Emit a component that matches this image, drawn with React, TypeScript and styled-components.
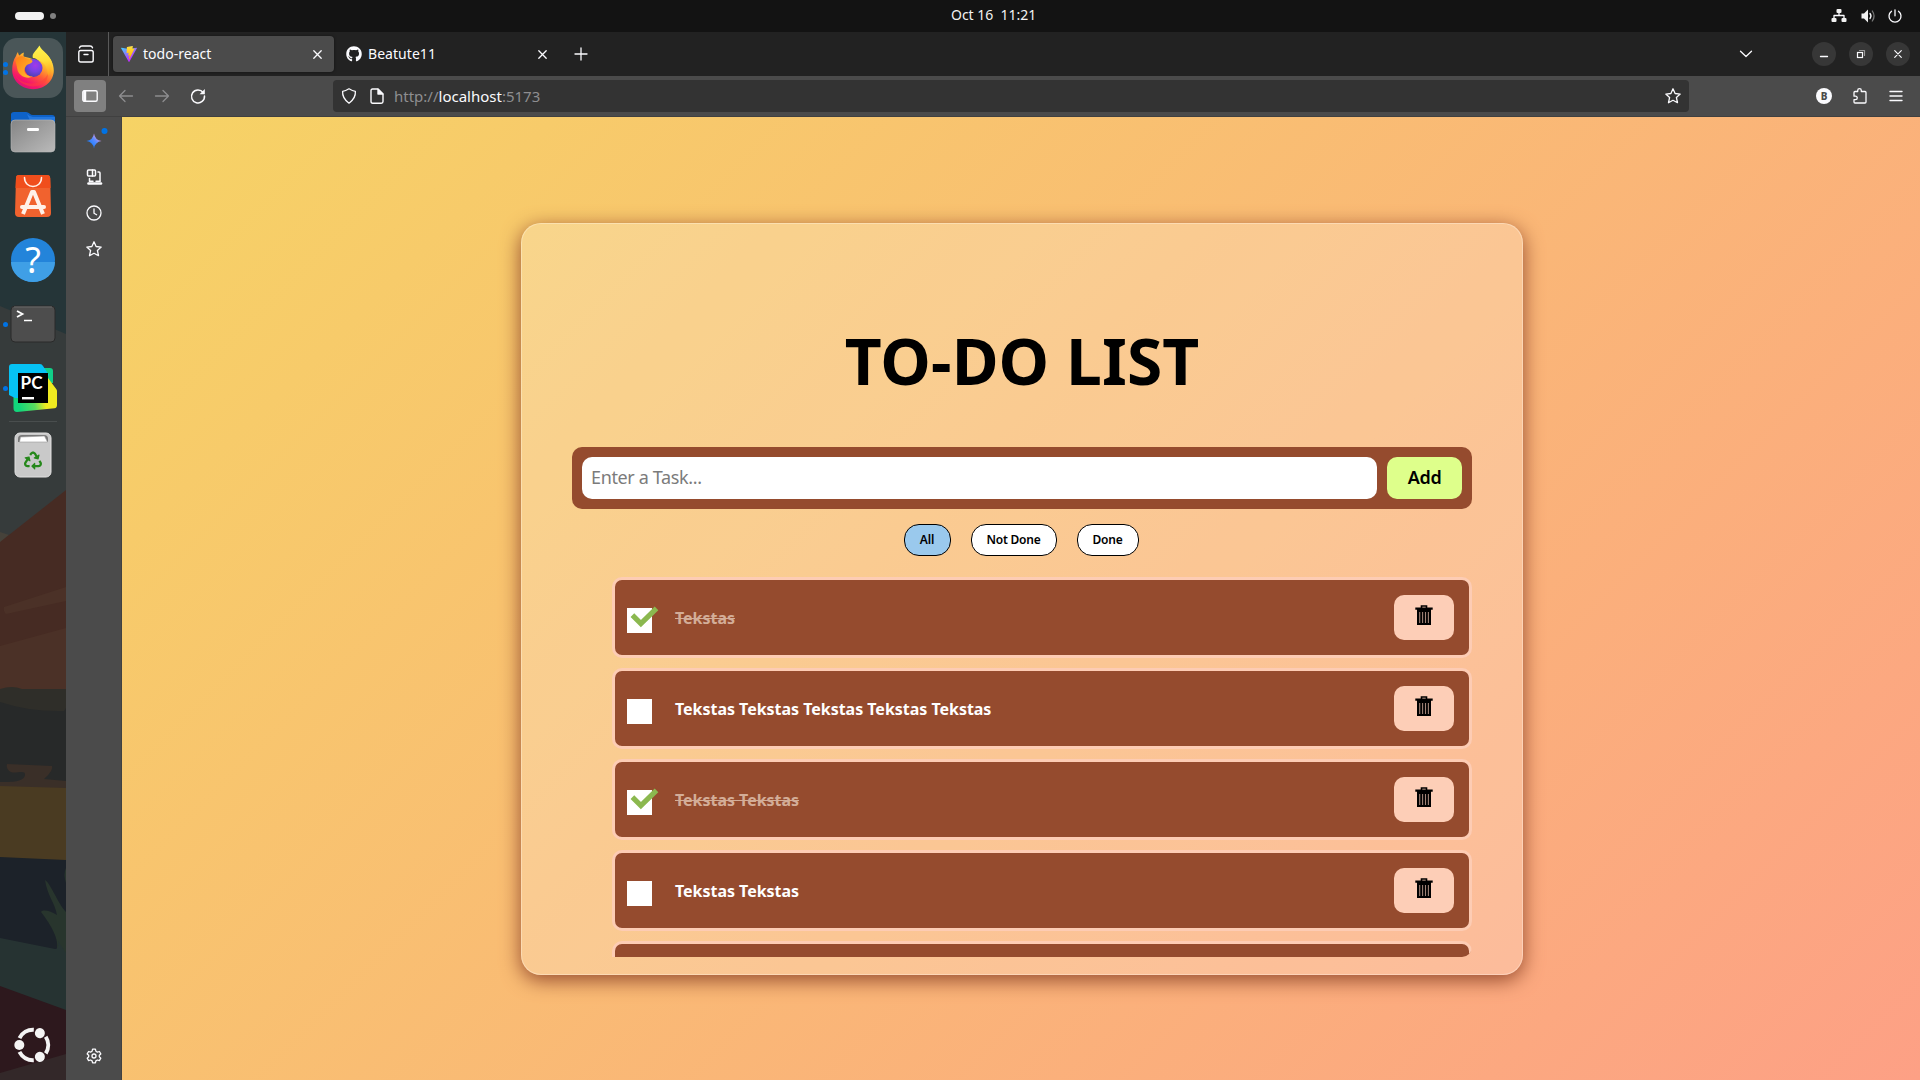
import React, { useState } from "react";
import styled, { createGlobalStyle } from "styled-components";
import { FaGithub, FaRecycle } from "react-icons/fa";

const ui = `"Noto Sans", "Open Sans", sans-serif`;

const GlobalStyle = createGlobalStyle`
  * { box-sizing: border-box; }
  body { margin: 0; background: #131313; font-family: ${ui}; overflow: hidden; }
  button, input { font-family: inherit; }
  svg { display: block; flex: none; overflow: visible; }
`;

const Desktop = styled.div`
  width: 1920px;
  height: 1080px;
  display: grid;
  grid-template: 32px 1048px / 66px 1fr;
  overflow: hidden;
`;

const TopBar = styled.header`
  grid-column: 1 / -1;
  display: grid;
  grid-template-columns: 951px 1fr auto;
  align-items: center;
  background: #131313;
  color: #f2f2f2;
  padding-right: 18px;
`;
const Workspaces = styled.div`
  display: flex;
  align-items: center;
  gap: 6px;
  padding-left: 15px;
`;
const WorkspaceDot = styled.span<{ $active?: boolean }>`
  width: ${(p) => (p.$active ? 29 : 6)}px;
  height: ${(p) => (p.$active ? 8 : 6)}px;
  border-radius: 4px;
  background: ${(p) => (p.$active ? "#f2f2f2" : "#808080")};
`;
const Clock = styled.div`
  font-size: 14px;
  line-height: 20px;
  letter-spacing: -0.02px;
  white-space: pre;
  padding-bottom: 2px;
`;
const StatusIcons = styled.div`
  display: flex;
  align-items: center;
  gap: 12.5px;
`;

const Dock = styled.nav`
  position: relative;
  display: flex;
  flex-direction: column;
  align-items: center;
  padding-top: 6px;
  overflow: hidden;
`;
const Wallpaper = styled.svg`
  position: absolute;
  inset: 0;
`;
const DockItem = styled.div<{ $h: number; $active?: boolean }>`
  position: relative;
  width: 60px;
  height: ${(p) => p.$h}px;
  display: flex;
  align-items: center;
  justify-content: center;
  padding-bottom: ${(p) => (p.$active ? 2 : 0)}px;
  border-radius: 14px;
  background: ${(p) => (p.$active ? "#4a5658" : "transparent")};
`;
const Running = styled.span`
  position: absolute;
  left: 0;
  top: 0;
  height: 100%;
  display: flex;
  flex-direction: column;
  justify-content: center;
  gap: 3px;
  i { width: 5px; height: 5px; border-radius: 50%; background: #0073e5; }
`;
const DockRule = styled.hr`
  position: relative;
  width: 48px;
  height: 1px;
  margin: -2px 0 6px;
  border: 0;
  background: #494e4e;
`;
const DockSpacer = styled.div`
  flex: 1;
`;

const Browser = styled.div`
  display: grid;
  grid-template: 44px 41px 963px / 56px 1fr;
  background: #4b4b4b;
  color: #fbfbfe;
`;
const TabStrip = styled.div`
  grid-column: 1 / -1;
  display: flex;
  align-items: center;
  background: #222222;
  padding-right: 10px;
`;
const TabArchive = styled.div`
  width: 43px;
  height: 44px;
  padding-left: 12px;
  margin-right: 4px;
  display: flex;
  align-items: center;
  border-right: 1px solid #5a5a5a;
`;
const Tab = styled.div<{ $active?: boolean }>`
  width: 221px;
  height: 36px;
  display: flex;
  align-items: center;
  gap: 6px;
  padding: 0 12px 0 8px;
  margin-right: 4px;
  border-radius: 4px;
  background: ${(p) => (p.$active ? "#4b4b4b" : "transparent")};
  box-shadow: ${(p) => (p.$active ? "0 0 3px rgba(0,0,0,.5)" : "none")};
`;
const TabTitle = styled.span<{ $spacing: number }>`
  flex: 1;
  font-size: 14px;
  line-height: 20px;
  letter-spacing: ${(p) => p.$spacing}px;
`;
const NewTab = styled.div`
  padding-left: 11px;
`;
const Spacer = styled.div`
  flex: 1;
`;
const TabChevron = styled.div`
  margin-right: 59px;
`;
const WindowButtons = styled.div`
  display: flex;
  gap: 13px;
`;
const WindowButton = styled.span`
  width: 24px;
  height: 24px;
  border-radius: 50%;
  background: #373737;
  display: flex;
  align-items: center;
  justify-content: center;
`;

const NavBar = styled.div`
  grid-column: 1 / -1;
  display: flex;
  align-items: center;
  padding: 0 16px 1px 8px;
  border-bottom: 1px solid #404040;
`;
const SidebarToggle = styled.div`
  width: 32px;
  height: 32px;
  border-radius: 4px;
  background: #808080;
  display: flex;
  align-items: center;
  justify-content: center;
`;
const NavIcons = styled.div`
  display: flex;
  gap: 20px;
  padding-left: 12px;
  width: 227px;
`;
const AddressBar = styled.div`
  width: 1356px;
  height: 32px;
  border-radius: 4px;
  background: #333333;
  display: flex;
  align-items: center;
  padding: 0 8px;
`;
const Url = styled.span`
  flex: 1;
  margin-left: 1px;
  font-size: 15px;
  line-height: 20px;
  color: #8e8e90;
  b { font-weight: 400; color: #fbfbfe; }
`;
const NavTools = styled.div`
  flex: 1;
  display: flex;
  justify-content: flex-end;
  gap: 20px;
`;
const Account = styled.span`
  width: 16px;
  height: 16px;
  border-radius: 50%;
  background: #fbfbfe;
  color: #4b4b4b;
  font: 800 10px/16px ${ui};
  text-align: center;
`;

const SideBar = styled.aside`
  display: flex;
  flex-direction: column;
  align-items: center;
  gap: 20px;
  padding: 10px 0 16px;
  border-right: 1px solid #414141;
`;

const Page = styled.main`
  display: flex;
  align-items: center;
  justify-content: center;
  padding-left: 2px;
  padding-top: 1px;
  background: linear-gradient(135deg, #f6d365 0%, #fda085 100%);
`;
const Card = styled.section`
  width: 1002px;
  height: 752px;
  padding: 0 50px;
  border-radius: 20px;
  border: 1px solid rgba(255, 255, 255, 0.3);
  background: rgba(255, 255, 255, 0.22);
  box-shadow: 0 5px 20px #954b2e;
  display: flex;
  flex-direction: column;
  align-items: center;
`;
const Title = styled.h1`
  margin: 93px 0 43px;
  font-size: 64px;
  line-height: 87px;
  font-weight: 700;
  letter-spacing: 0.1px;
  color: #000;
`;
const TaskForm = styled.form`
  width: 900px;
  height: 62px;
  padding: 10px;
  display: flex;
  gap: 10px;
  border-radius: 10px;
  background: #954b2e;
`;
const TaskInput = styled.input`
  flex: 1;
  min-width: 0;
  padding: 0 9px 2px;
  border: 0;
  border-radius: 10px;
  background: #fff;
  font-size: 18px;
  letter-spacing: -0.36px;
  outline: none;
  &::placeholder { color: #7b7b7b; opacity: 1; }
`;
const AddButton = styled.button`
  width: 75px;
  border: 0;
  padding: 0 0 2px;
  border-radius: 10px;
  background: #deff8b;
  color: #000;
  font-size: 18px;
  font-weight: 600;
  letter-spacing: -0.3px;
`;
const Filters = styled.div`
  display: flex;
  gap: 20px;
  margin: 15px 2px 21px 0;
`;
const FilterButton = styled.button<{ $w: number; $on: boolean }>`
  width: ${(p) => p.$w}px;
  height: 32px;
  padding: 0 0 1px;
  border: 1px solid #000;
  border-radius: 15px;
  background: ${(p) => (p.$on ? "#9ac9ed" : "#fff")};
  color: #000;
  font-size: 12px;
  font-weight: 600;
  letter-spacing: -0.2px;
  white-space: nowrap;
`;
const TaskList = styled.ul`
  width: 900px;
  height: 380px;
  margin: 0;
  padding: 0 0 0 40px;
  list-style: none;
  overflow: hidden;
  border-radius: 0 0 10px 10px;
`;
const TaskRow = styled.li`
  height: 81px;
  margin-bottom: 10px;
  padding: 0 15px 0 12px;
  display: flex;
  align-items: center;
  border: 3px solid #fdccb4;
  border-radius: 10px;
  background: #954b2e;
`;
const CheckBox = styled.span`
  width: 25px;
  height: 25px;
  margin-top: 6px;
  background: #fff;
  svg { margin: -2px 0 0 3px; }
`;
const TaskText = styled.span<{ $done: boolean }>`
  flex: 1;
  margin: 0 0 0 23px;
  font-size: 16px;
  line-height: 22px;
  font-weight: 700;
  letter-spacing: -0.03px;
  color: ${(p) => (p.$done ? "#d3ad98" : "#fff")};
  text-decoration: ${(p) => (p.$done ? "line-through" : "none")};
`;
const DeleteButton = styled.button`
  width: 60px;
  height: 45px;
  padding: 0 0 5px;
  border: 0;
  border-radius: 10px;
  background: #fdceb7;
  display: flex;
  align-items: center;
  justify-content: center;
`;

type IconProps = { w?: number; h?: number; box?: string; color?: string; sw?: number; children: React.ReactNode };
const Icon = ({ w = 16, h = w, box = `0 0 ${w} ${h}`, color = "#fbfbfe", sw = 1.3, children }: IconProps) => (
  <svg width={w} height={h} viewBox={box} fill="none" stroke={color} strokeWidth={sw} strokeLinecap="round" strokeLinejoin="round">
    {children}
  </svg>
);

const starPath = "M8 .8l2.100 4.700 5.100.6-3.800 3.400 1.100 5.200L8 12.300l-4.500 2.400 1.100-5.200L.8 6.100l5.100-.6z";

const CloseIcon = ({ size = 9 }: { size?: number }) => (
  <Icon w={size} box="0 0 9 9"><path d="M.8.8l7.400 7.400M8.200.8L.8 8.200" /></Icon>
);

const ViteLogo = () => (
  <svg width="16" height="16" viewBox="0 0 256 257">
    <defs>
      <linearGradient id="va" x1="0" x2=".58" y1="0" y2=".8"><stop offset="0" stopColor="#41d1ff" /><stop offset="1" stopColor="#bd34fe" /></linearGradient>
      <linearGradient id="vb" x1=".43" x2=".5" y1="0" y2="1"><stop offset="0" stopColor="#ffea83" /><stop offset=".1" stopColor="#ffdd35" /><stop offset="1" stopColor="#ffa800" /></linearGradient>
    </defs>
    <path fill="url(#va)" d="M255 38L134 254c-2 4-9 4-11 0L1 38c-3-5 1-11 7-10l120 22 120-22c6-1 10 5 7 10z" />
    <path fill="url(#vb)" d="M185 0L97 17c-1 0-2 1-3 3l-5 92c0 2 2 4 4 3l25-5c2-1 4 1 4 3l-8 36c0 3 2 5 4 4l16-5c2 0 4 2 4 4l-12 57c-1 4 4 6 6 3l85-167c1-2-1-5-3-4l-26 5c-2 0-4-2-4-4l5-38c1-3-1-5-4-4z" />
  </svg>
);

const FirefoxIcon = () => (
  <svg width="44" height="46" viewBox="0 0 44 46">
    <defs>
      <linearGradient id="fa" x1=".85" y1=".05" x2=".25" y2="1"><stop offset="0" stopColor="#fff44f" /><stop offset=".3" stopColor="#ffb32c" /><stop offset=".55" stopColor="#ff5b36" /><stop offset=".8" stopColor="#f5156c" /><stop offset="1" stopColor="#d5117a" /></linearGradient>
      <linearGradient id="fb" x1=".5" y1="0" x2=".6" y2="1"><stop offset="0" stopColor="#fff44f" /><stop offset=".5" stopColor="#ffe03a" /><stop offset="1" stopColor="#ff9a1e" /></linearGradient>
      <radialGradient id="fc" cx=".6" cy=".35" r=".7"><stop offset="0" stopColor="#a438e8" /><stop offset=".5" stopColor="#7542e5" /><stop offset="1" stopColor="#4a40a8" /></radialGradient>
      <linearGradient id="fd" x1="0" y1="0" x2="1" y2="1"><stop offset="0" stopColor="#ff7d16" /><stop offset="1" stopColor="#ffc02d" /></linearGradient>
    </defs>
    <path fill="url(#fa)" d="M5 12c.4-1.600 1.200-2.800 2-4 .1 1.500.6 2.600 1.400 3.500C10 9.800 11.500 9 13 8.500c-.6 1.800-.5 3-.3 4l6 1.500L27 17c8-2 7-7 6-9 6 4.500 9.800 11.500 9.800 18.500C42.800 37 33.500 45.200 22.200 45.200S1.200 37 1.200 26C1.200 20.500 2.300 16 5 12z" />
    <path fill="url(#fb)" d="M28.400 1.500c2.200 5.500 11 9 13 18.500l-1-1c1 6-1 11-4 13 1-7-2-13-9-15.500-3-2.500-5-2.500-5.500-2.500C20.500 9 25 7.500 28.400 1.500z" />
    <circle cx="22.500" cy="24" r="9" fill="url(#fc)" />
    <path fill="url(#fd)" d="M4.500 16c2-3.500 5-4.500 8-3.500 2.500 2.500 5 2.600 8 3.500 1.500.7 1.200 2-.4 3-2.500 1.400-4.600 1.600-5.700 4-3 5 1.500 10 7.600 9.600C15 36 7 31 6.300 25 5.800 21 5 20 4.500 16z" />
    <path fill="#ff3f3c" opacity=".5" d="M3 27c2 8 9 12.500 17.500 12.500 9 0 14.500-5 16.500-10 0 8-6 13-15 13S4.500 36 3 27z" />
  </svg>
);
const FilesIcon = () => (
  <svg width="44" height="42" viewBox="0 0 44 42">
    <defs><linearGradient id="fi" x1="0" y1="0" x2="1" y2="1"><stop stopColor="#858585" /><stop offset="1" stopColor="#bababa" /></linearGradient></defs>
    <path fill="#0e62c8" d="M0 14V3.500Q0 1 3 1h12q2 0 3.500 1.500T22 4h19q3 0 3 3v14H0z" />
    <path fill="#2e84ed" d="M16 3q3 3 6 3h22v6H20z" opacity=".65" />
    <rect y="9" width="44" height="32" rx="4" fill="url(#fi)" stroke="#b8b8b8" strokeWidth=".6" />
    <rect x="16" y="17" width="12" height="3" rx="1.200" fill="#fff" />
  </svg>
);
const AppCenterIcon = () => (
  <svg width="38" height="44" viewBox="0 0 38 44">
    <path fill="#f1622e" d="M5 1h28q3 0 3.200 3L37 39q0 4-4 4H5q-4 0-4-4L2 4Q2 1 5 1z" />
    <path fill="#f04e1c" d="M5 1h28q3 0 3.200 3l.4 10H1.500L2 4Q2 1 5 1z" />
    <g fill="none" stroke="#fff1e9" strokeLinecap="round">
      <path strokeWidth="1.500" d="M10.500 3.500c0 12 17 12 17 0" />
      <path strokeWidth="4" strokeLinejoin="round" strokeLinecap="butt" d="M9 40l9-22h2l9 22" />
      <path strokeWidth="4" d="M8 33h22" />
    </g>
  </svg>
);
const HelpIcon = () => (
  <svg width="44" height="44" viewBox="0 0 44 44">
    <circle cx="22" cy="22" r="22" fill="#2384da" />
    <path d="M0 24a22 20 0 0044 0z" fill="#3f9fe6" />
    <text x="22" y="34.500" textAnchor="middle" fill="#fff" fontSize="36" fontFamily="Noto Sans, sans-serif">?</text>
  </svg>
);
const TerminalIcon = () => (
  <svg width="46" height="38" viewBox="0 0 46 38">
    <rect x="1" y="1" width="44" height="36" rx="4" fill="#4d4d4d" stroke="#2a2a2a" />
    <path d="M4 2h38" stroke="#686868" />
    <path d="M7 6l5.500 3L7 12" fill="none" stroke="#fff" strokeWidth="1.800" />
    <path d="M14 15.500h8" stroke="#fff" strokeWidth="1.500" />
  </svg>
);
const PyCharmIcon = () => (
  <svg width="48" height="48" viewBox="0 0 48 48">
    <defs>
      <linearGradient id="pa" x1="0" y1=".2" x2="1" y2="0"><stop offset="0" stopColor="#12d67b" /><stop offset=".35" stopColor="#5bdc5e" /><stop offset=".6" stopColor="#f0eb20" /></linearGradient>
    </defs>
    <path fill="#10cf88" d="M28 4h13q3 0 3 3v12H28z" />
    <path fill="url(#pa)" d="M4.500 31l9-8L39 14l8.200 11q.8 1 .8 2v14q0 3-2.500 3.200L8 48q-3.500 0-3.500-4z" />
    <path fill="#06c2f4" d="M3 0h28q2 0 3 2l6 9-25 23H6l-6-3V3q0-3 3-3z" />
    <rect x="9" y="9" width="30" height="30" fill="#000" />
    <text x="11.500" y="24.500" fill="#fff" fontFamily="Lato, sans-serif" fontWeight="700" fontSize="16.500" textLength="22" lengthAdjust="spacingAndGlyphs">PC</text>
    <path fill="#fff" d="M13 33h12v2.400H13z" />
  </svg>
);
const TrashDockIcon = () => (
  <svg width="38" height="46" viewBox="0 0 38 46">
    <rect x="1" y="1" width="36" height="44" rx="5" fill="#c9c9c9" stroke="#e1e1e1" />
    <path d="M4 10V7q0-4 4-4h22q4 0 4 4v3z" fill="#777" />
    <path d="M5.500 10l1-5 24-1 3 6z" fill="#fff" stroke="#999" strokeWidth=".6" />
    <FaRecycle x="10" y="19.500" size={18} color="#26881b" />
  </svg>
);
const UbuntuIcon = () => (
  <svg width="40" height="40" viewBox="-20 -20 40 40">
    {[60, 180, 300].map((a) => (
      <g key={a} transform={`rotate(${a})`}>
        <circle cx="13.700" cy="0" r="5" fill="#f4f4f4" />
        <path d="M13.500 6.900A15.200 15.200 0 01-.8 15.200" fill="none" stroke="#f4f4f4" strokeWidth="4" />
      </g>
    ))}
  </svg>
);

const DockWallpaper = () => (
  <Wallpaper width="66" height="1048" viewBox="0 32 66 1048">
    <rect y="32" width="66" height="1048" fill="#253538" />
    <path fill="#363b3b" d="M0 306l66 28v400H0z" />
    <path fill="#46423a" d="M0 532l9 3-9 8z" />
    <path fill="#462b23" d="M66 490v250H0V542z" />
    <path fill="#4b3127" d="M4 607l62-20v14L6 614q-3-3-2-7zM0 646l66-18v70H0z" />
    <path fill="#2f2e29" d="M0 689q12-4 22 0l44 0v30H0z" />
    <path fill="#272929" d="M0 702q30 10 64 9l2-3v90H0z" />
    <path fill="#3a2f28" d="M7 764l45 2q2 4-8 13l22 2v10H0v-9c12 0 24 0 25-7 1-6-10-1-14-3-3-1-5-5-4-8z" />
    <path fill="#4a3b22" d="M0 786l66 2v74H0z" />
    <path fill="#1c2229" d="M0 857l66 3v115H0z" />
    <path fill="#28352d" d="M45 880c6 4 12 22 21 32v60H60L57 948c2-10-8-26-16-36 2-3 10-1 16 3-2-12-10-20-12-35zM66 868q-3 6 0 15z" />
    <path fill="#263332" d="M0 938l55 11q4 0 3-8l8 12v100H0z" />
    <path fill="#2d181d" d="M0 986l66 24v70H0z" />
    <path fill="#332829" d="M0 1073l66-19v26H0z" />
  </Wallpaper>
);

const TrashGlyph = () => (
  <svg width="18" height="20" viewBox="0 0 18 20">
    <path d="M6.500 3V1h5v2" fill="none" stroke="#000" strokeWidth="1.600" />
    <path d="M.3 2.600h17.400v2.200H.3zM2 4h14v16H2z" fill="#000" />
    <path d="M4.700 7v11M7.600 7v11M10.500 7v11M13.400 7v11" stroke="#a08377" strokeWidth="1.100" />
  </svg>
);
const CheckGlyph = () => (
  <svg width="29" height="21" viewBox="0 0 29 21">
    <path d="M2.400 9.200l8.500 8.500L26.500 2.400" fill="none" stroke="#8bb84f" strokeWidth="5.200" />
  </svg>
);

const tasks = [
  { text: "Tekstas", done: true },
  { text: "Tekstas Tekstas Tekstas Tekstas Tekstas", done: false },
  { text: "Tekstas Tekstas", done: true },
  { text: "Tekstas Tekstas", done: false },
  { text: "", done: false },
];
const filters = [
  { name: "All", width: 47 },
  { name: "Not Done", width: 86 },
  { name: "Done", width: 62 },
];

function TodoPage() {
  const [filter, setFilter] = useState("All");
  const shown = tasks.filter((t) => filter === "All" || (filter === "Done") === t.done);
  return (
    <Page>
      <Card>
        <Title>TO-DO LIST</Title>
        <TaskForm onSubmit={(e) => e.preventDefault()}>
          <TaskInput placeholder="Enter a Task..." />
          <AddButton>Add</AddButton>
        </TaskForm>
        <Filters>
          {filters.map((f) => (
            <FilterButton key={f.name} $w={f.width} $on={filter === f.name} onClick={() => setFilter(f.name)}>
              {f.name}
            </FilterButton>
          ))}
        </Filters>
        <TaskList>
          {shown.map((t, i) => (
            <TaskRow key={i}>
              <CheckBox>{t.done && <CheckGlyph />}</CheckBox>
              <TaskText $done={t.done}>{t.text}</TaskText>
              <DeleteButton><TrashGlyph /></DeleteButton>
            </TaskRow>
          ))}
        </TaskList>
      </Card>
    </Page>
  );
}

export default function App() {
  return (
    <>
      <GlobalStyle />
      <Desktop>
        <TopBar>
          <Workspaces>
            <WorkspaceDot $active />
            <WorkspaceDot />
          </Workspaces>
          <Clock>{"Oct 16  11:21"}</Clock>
          <StatusIcons>
            <Icon w={16}>
              <g fill="#f2f2f2" stroke="none"><rect x="5.500" y="1" width="5" height="4" rx="1" /><rect x=".5" y="10" width="5" height="4" rx="1" /><rect x="10.500" y="10" width="5" height="4" rx="1" /></g>
              <path d="M8 5v2.500M3 10V7.500h10V10" />
            </Icon>
            <Icon w={16}>
              <path d="M1.500 5.500H4l4-4v13l-4-4H1.500z" fill="#f2f2f2" stroke="none" />
              <path d="M10 5.500q2 2.500 0 5" />
              <path d="M12.300 3q3.500 5 0 10" stroke="#777" />
            </Icon>
            <Icon w={14} box="1 1 14 14"><path d="M8 1.800v6M4.500 3.300a6 6 0 107 0" /></Icon>
          </StatusIcons>
        </TopBar>

        <Dock>
          <DockWallpaper />
          <DockItem $h={60} $active><Running><i /><i /></Running><FirefoxIcon /></DockItem>
          <DockItem $h={68}><FilesIcon /></DockItem>
          <DockItem $h={59}><AppCenterIcon /></DockItem>
          <DockItem $h={70}><HelpIcon /></DockItem>
          <DockItem $h={58}><Running><i /></Running><TerminalIcon /></DockItem>
          <DockItem $h={70}><Running><i /></Running><PyCharmIcon /></DockItem>
          <DockRule />
          <DockItem $h={53}><TrashDockIcon /></DockItem>
          <DockSpacer />
          <DockItem $h={71}><UbuntuIcon /></DockItem>
        </Dock>

        <Browser>
          <TabStrip>
            <TabArchive>
              <Icon w={16} h={18} sw={1.4}>
                <rect x=".8" y="5.500" width="14.400" height="11.500" rx="1.800" />
                <path d="M1.500 2.800Q2 1 4 1h8q2 0 2.500 1.800M6 9.500h4" />
              </Icon>
            </TabArchive>
            <Tab $active>
              <ViteLogo />
              <TabTitle $spacing={0.02}>todo-react</TabTitle>
              <CloseIcon />
            </Tab>
            <Tab>
              <FaGithub size={16} color="#fbfbfe" />
              <TabTitle $spacing={0.05}>Beatute11</TabTitle>
              <CloseIcon />
            </Tab>
            <NewTab>
              <Icon w={14}><path d="M7 1v12M1 7h12" /></Icon>
            </NewTab>
            <Spacer />
            <TabChevron>
              <Icon w={14} h={8}><path d="M1.500 1.200L7 6.500l5.500-5.300" /></Icon>
            </TabChevron>
            <WindowButtons>
              <WindowButton><Icon w={10}><path d="M1.500 7.500h7" /></Icon></WindowButton>
              <WindowButton>
                <Icon w={10} sw={1.2}><rect x="1.500" y="3.500" width="5" height="5" strokeLinejoin="miter" /><path d="M3.500 1.500h5v5" stroke="#999" /></Icon>
              </WindowButton>
              <WindowButton><CloseIcon size={8} /></WindowButton>
            </WindowButtons>
          </TabStrip>

          <NavBar>
            <SidebarToggle>
              <Icon w={16} h={12} sw={1.4}><rect x=".8" y=".8" width="14.400" height="10.400" rx="1.500" /><path d="M2.700 1.500v9" strokeWidth="3" /></Icon>
            </SidebarToggle>
            <NavIcons>
              <Icon color="#8d8d8f"><path d="M14.500 8H1.500M7 2.500L1.500 8 7 13.500" /></Icon>
              <Icon color="#8d8d8f"><path d="M1.500 8h13M9 2.500L14.500 8 9 13.500" /></Icon>
              <Icon sw={1.5}><path d="M13.200 4.500A6.500 6.500 0 1014.500 8" /><path d="M14.800 1v5.200H9.600z" fill="#fbfbfe" stroke="none" /></Icon>
            </NavIcons>
            <AddressBar>
              <Icon><path d="M8 .8q3.500 2.300 6.400 2.500.5 7-6.400 11.900Q1.100 10.300 1.600 3.300 4.500 3.100 8 .8z" /></Icon>
              <Icon w={36} box="-14 0 36 16" h={16} sw={1.4}>
                <path d="M1.500 1h5.500l5 5v7.500q0 1.700-1.700 1.700H1.700Q0 15.200 0 13.500v-11Q0 1 1.500 1z" /><path d="M7 1.200V6h4.800z" fill="#fbfbfe" />
              </Icon>
              <Url>http://<b>localhost</b>:5173</Url>
              <Icon><path d={starPath} /></Icon>
            </AddressBar>
            <NavTools>
              <Account>B</Account>
              <Icon><path d="M2 5.500V4.500q0-1 1-1h2.700V2.500a1.800 1.800 0 013.600 0v1H13q1 0 1 1V14q0 1-1 1H3q-1 0-1-1v-2.300h1.500a1.700 1.700 0 000-3.500H2z" /></Icon>
              <Icon sw={1.4}><path d="M2 3.500h12M2 8h12M2 12.500h12" /></Icon>
            </NavTools>
          </NavBar>

          <SideBar>
            <Icon w={22}>
              <defs><linearGradient id="sp" x1="0" y1="1" x2="1" y2="0"><stop offset=".2" stopColor="#0f7bff" /><stop offset=".55" stopColor="#5b8cff" /><stop offset=".8" stopColor="#e39ae0" /></linearGradient></defs>
              <path d="M11 6.500q1 6.500 7.500 7.500-6.500 1-7.500 7.500Q10 15 3.500 14 10 13 11 6.500z" fill="url(#sp)" stroke="none" />
              <circle cx="21.500" cy="4" r="3" fill="#0073e5" stroke="none" />
            </Icon>
            <Icon sw={1.5}>
              <rect x="1.500" y="1" width="8" height="6" rx="1" /><path d="M6.500 1v6M12 3h1q1 0 1 1v8M3.500 9.500v3" /><path d="M2.500 14.500h12.500" strokeWidth="2.600" /><path d="M4 12.200h3M10 12.200h4" />
            </Icon>
            <Icon><circle cx="8" cy="8" r="7" /><path d="M8 4v4.300l2.600 1.500" /></Icon>
            <Icon><path d={starPath} /></Icon>
            <Spacer />
            <Icon><circle cx="8" cy="8" r="2" /><path d="M6.600 1.200h2.800l.5 2 1.500.9 2-.6 1.400 2.400-1.500 1.400v1.500l1.500 1.400-1.400 2.400-2-.6-1.500.9-.5 2H6.600l-.5-2-1.500-.9-2 .6-1.400-2.400 1.500-1.400V7.300L1.200 5.900l1.400-2.400 2 .6 1.500-.9z" /></Icon>
          </SideBar>

          <TodoPage />
        </Browser>
      </Desktop>
    </>
  );
}
